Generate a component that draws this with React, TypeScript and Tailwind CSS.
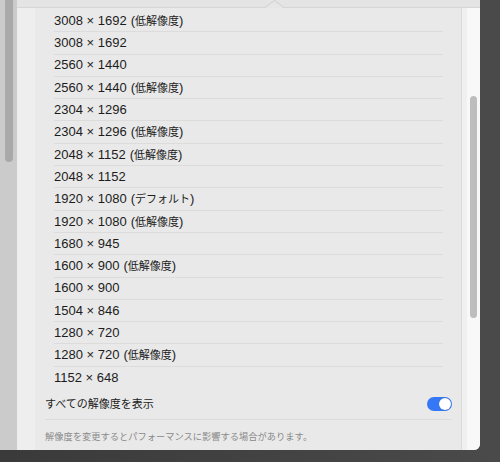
import React from "react";

const rows: [string, string?][] = [
  ["3008 × 1692", "低解像度"],
  ["3008 × 1692"],
  ["2560 × 1440"],
  ["2560 × 1440", "低解像度"],
  ["2304 × 1296"],
  ["2304 × 1296", "低解像度"],
  ["2048 × 1152", "低解像度"],
  ["2048 × 1152"],
  ["1920 × 1080", "デフォルト"],
  ["1920 × 1080", "低解像度"],
  ["1680 × 945"],
  ["1600 × 900", "低解像度"],
  ["1600 × 900"],
  ["1504 × 846"],
  ["1280 × 720"],
  ["1280 × 720", "低解像度"],
  ["1152 × 648"],
];

export default function App() {
  return (
    <div
      className="w-[500px] h-[462px] overflow-hidden bg-linear-to-r from-[#3a3a3a] to-[#4a4a4a]"
      style={{ fontFamily: '"Liberation Sans", "Noto Sans CJK JP", sans-serif' }}
    >
      <div className="flex w-[480px] h-[450px] overflow-hidden rounded-br-[6px] bg-[#e9e9e9]">
        {/* left strip with scrollbar */}
        <div className="w-[17px] h-full shrink-0 bg-[#cbcbcb]">
          <div className="ml-[5px] w-[8px] h-[162px] rounded-b-full bg-[#a9a9a9]" />
        </div>
        {/* main column */}
        <div className="flex flex-col w-[463px] h-full">
          {/* top band */}
          <div className="relative h-[8px] shrink-0 bg-[#e4e4e4] border-b border-[#d6d6d6]">
            <svg
              className="absolute left-[248px] top-0"
              width="19"
              height="8"
              viewBox="0 0 19 8"
            >
              <path d="M0 8 L9.5 0.5 L19 8 Z" fill="#e6e6e6" />
              <path d="M0 7.5 L9.5 0.5 L19 7.5" fill="none" stroke="#cfcfcf" strokeWidth="1" />
            </svg>
          </div>
          <div className="flex flex-1 min-h-0">
            {/* gutter */}
            <div className="w-[18px] shrink-0 bg-[#eeeeee]" />
            {/* panel */}
            <div className="w-[427px] shrink-0 bg-[#e9e9e9] border-r border-[#dadada] flex flex-col">
              <div className="pl-[19px] pr-[18px] pt-[2px] flex flex-col divide-y divide-[#dcdcdc]">
                {rows.map(([res, note], i) => (
                  <div
                    key={i}
                    className="h-[22.3px] flex items-center text-[13px] text-[#1c1c1c] whitespace-nowrap"
                  >
                    <span>{res}</span>
                    {note && (
                      <span className="ml-[4px]">
                        (<span className="text-[11px]">{note}</span>)
                      </span>
                    )}
                  </div>
                ))}
              </div>
              <div className="ml-[10px] mr-[9px] h-[31px] flex items-center justify-between border-b border-[#dcdcdc]">
                <span className="text-[11px] text-[#1c1c1c]">すべての解像度を表示</span>
                <div className="w-[25px] h-[14px] rounded-full bg-[#3478f6] flex items-center justify-end pr-[1px]">
                  <div className="w-[12px] h-[12px] rounded-full bg-white shadow-[0_0_1px_rgba(0,0,0,0.3)]" />
                </div>
              </div>
              <div className="ml-[10px] mt-[13px] text-[9.25px] leading-none text-[#8a8a8a] whitespace-nowrap">
                解像度を変更するとパフォーマンスに影響する場合があります。
              </div>
            </div>
            {/* right scrollbar track */}
            <div className="w-[18px] shrink-0 bg-[#f8f8f8] border-l-[5px] border-[#f0f0f0]">
              <div className="ml-[3px] mt-[88px] w-[7px] h-[222px] rounded-full bg-[#bdbdbd]" />
            </div>
          </div>
        </div>
      </div>
    </div>
  );
}
